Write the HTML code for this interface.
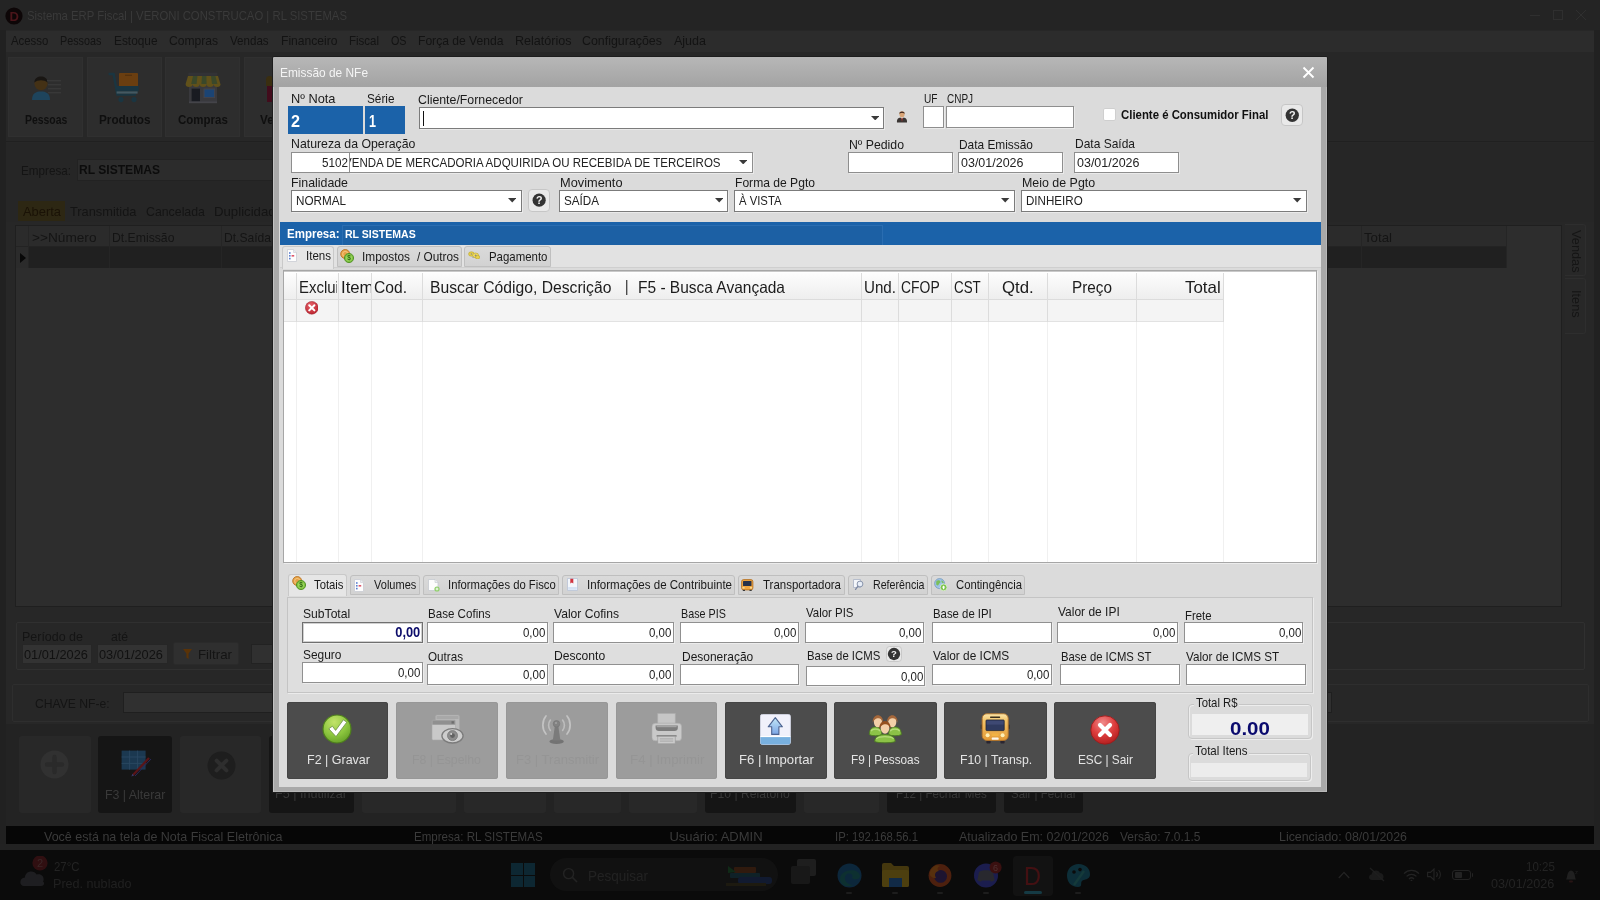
<!DOCTYPE html>
<html>
<head>
<meta charset="utf-8">
<title>Emissão de NFe</title>
<style>
*{box-sizing:border-box;margin:0;padding:0}
html,body{width:1600px;height:900px;overflow:hidden;background:#2b2b2b;font-family:"Liberation Sans",sans-serif;}
.a{position:absolute;white-space:nowrap;}
.t{position:absolute;white-space:nowrap;line-height:1;transform-origin:0 50%;}
/* ---------- dimmed background app ---------- */
#bg{will-change:transform;position:absolute;left:0;top:0;width:1600px;height:900px;background:#2b2b2b;overflow:hidden;}
#bg .t{color:#151515;font-size:13px;}
/* ---------- dialog ---------- */
#dlg{position:absolute;left:273px;top:57px;width:1054px;height:735px;background:#a9a9a9;border-radius:2px 2px 0 0;box-shadow:inset 1px 1px 0 #c2c2c2,inset -1px -1px 0 #b8b8b8,0 0 0 1px #1d1d1d;}
#dlgtitle{position:absolute;left:0;top:0;width:1054px;height:30px;background:linear-gradient(#b7b7b7,#a3a3a3);border-radius:2px 2px 0 0;}
#panel{position:absolute;left:279px;top:87px;width:1042px;height:700px;background:#dbdbdb;}
.lb{position:absolute;white-space:nowrap;line-height:1;font-size:13px;color:#111;transform-origin:0 50%;}
.in{position:absolute;background:#fff;border:1px solid #8a8a8a;font-size:13px;color:#111;line-height:1;overflow:hidden;white-space:nowrap;}
.num{position:absolute;background:#fff;border:1px solid #8a8a8a;border-top-color:#707070;font-size:13px;color:#111;text-align:right;padding:5px 3px 0 0;line-height:1;height:22px;width:121px;}
.arr{position:absolute;width:0;height:0;border-left:4px solid transparent;border-right:4px solid transparent;border-top:5px solid #333;}
</style>
</head>
<body>
<div id="bg">
<div class="a" style="left:0px;top:0px;width:1600px;height:30px;background:#242424;"></div>
<div class="a" style="left:0px;top:30px;width:1600px;height:820px;background:#272727;"></div>
<div class="a" style="left:0px;top:30px;width:6px;height:820px;background:#212121;"></div>
<div class="a" style="left:1594px;top:30px;width:6px;height:820px;background:#212121;"></div>
<svg class="a" style="left:5px;top:6.5px;" width="18" height="18" viewBox="0 0 18 18"><circle cx="9" cy="9" r="8.6" fill="#0d0607"/><text x="9.3" y="13.6" font-family="Liberation Sans" font-weight="bold" font-size="13" fill="#4a151a" text-anchor="middle">D</text></svg>
<span class="t" style="left:27.0px;top:8.8px;font-size:13.5px;color:#3a3a3a;transform:scaleX(0.839);">Sistema ERP Fiscal | VERONI CONSTRUCAO | RL SISTEMAS</span>
<div class="a" style="left:1530px;top:15px;width:10px;height:1px;background:#2f2f2f;"></div>
<div class="a" style="left:1553px;top:10px;width:10px;height:10px;border:1px solid #2f2f2f;"></div>
<svg class="a" style="left:1576px;top:10px;" width="10" height="10" viewBox="0 0 10 10"><path d="M0 0L10 10M10 0L0 10" stroke="#2f2f2f" stroke-width="1"/></svg>
<div class="a" style="left:6px;top:30.5px;width:1588px;height:21.5px;background:#2c2c2c;"></div>
<span class="t" style="left:10.7px;top:34.4px;font-size:13px;color:#131313;transform:scaleX(0.875);">Acesso</span>
<span class="t" style="left:60.4px;top:34.4px;font-size:13px;color:#131313;transform:scaleX(0.828);">Pessoas</span>
<span class="t" style="left:113.8px;top:34.4px;font-size:13px;color:#131313;transform:scaleX(0.912);">Estoque</span>
<span class="t" style="left:169.2px;top:34.4px;font-size:13px;color:#131313;transform:scaleX(0.931);">Compras</span>
<span class="t" style="left:230.2px;top:34.4px;font-size:13px;color:#131313;transform:scaleX(0.890);">Vendas</span>
<span class="t" style="left:281.0px;top:34.4px;font-size:13px;color:#131313;transform:scaleX(0.931);">Financeiro</span>
<span class="t" style="left:349.0px;top:34.4px;font-size:13px;color:#131313;transform:scaleX(0.884);">Fiscal</span>
<span class="t" style="left:391.0px;top:34.4px;font-size:13px;color:#131313;transform:scaleX(0.825);">OS</span>
<span class="t" style="left:418.0px;top:34.4px;font-size:13px;color:#131313;transform:scaleX(0.931);">Força de Venda</span>
<span class="t" style="left:515.0px;top:34.4px;font-size:13px;color:#131313;transform:scaleX(0.965);">Relatórios</span>
<span class="t" style="left:582.0px;top:34.4px;font-size:13px;color:#131313;transform:scaleX(0.954);">Configurações</span>
<span class="t" style="left:674.0px;top:34.4px;font-size:13px;color:#131313;transform:scaleX(0.962);">Ajuda</span>
<div class="a" style="left:6px;top:52px;width:1588px;height:89.5px;background:#272727;border-bottom:1px solid #202020;"></div>
<div class="a" style="left:8px;top:57px;width:75.2px;height:80px;background:#2d2d2d;border:1px solid #303030;"></div>
<div class="a" style="left:87.1px;top:57px;width:74.7px;height:80px;background:#2d2d2d;border:1px solid #303030;"></div>
<div class="a" style="left:165.3px;top:57px;width:74.7px;height:80px;background:#2d2d2d;border:1px solid #303030;"></div>
<div class="a" style="left:243.9px;top:57px;width:74.1px;height:80px;background:#2d2d2d;border:1px solid #303030;"></div>
<span class="t" style="left:25.4px;top:113.0px;font-size:13px;font-weight:bold;color:#0f0f0f;transform:scaleX(0.800);">Pessoas</span>
<span class="t" style="left:98.7px;top:113.0px;font-size:13px;font-weight:bold;color:#0f0f0f;transform:scaleX(0.903);">Produtos</span>
<span class="t" style="left:177.8px;top:113.0px;font-size:13px;font-weight:bold;color:#0f0f0f;transform:scaleX(0.884);">Compras</span>
<span class="t" style="left:259.5px;top:113.0px;font-size:13px;font-weight:bold;color:#0f0f0f;transform:scaleX(0.900);">Vendas</span>
<svg class="a" style="left:31px;top:74px;opacity:.8;" width="31" height="27" viewBox="0 0 31 27"><path d="M1 26C1 19 5 17.4 10 17.4C15 17.4 19 19 19 26Z" fill="#1b4a68"/><circle cx="10" cy="9.6" r="6.6" fill="#4a3210"/><path d="M3.4 8.4C3.4 0.6 16.6 0.6 16.6 8.4C13 5.6 7 5.6 3.4 8.4Z" fill="#15110d"/><rect x="16" y="6" width="14" height="1.4" fill="#3b3b3b"/><rect x="17" y="10" width="13" height="1.4" fill="#3b3b3b"/><rect x="17" y="14" width="13" height="1.4" fill="#3b3b3b"/><rect x="17" y="18" width="13" height="1.4" fill="#3b3b3b"/></svg>
<svg class="a" style="left:108px;top:71.5px;opacity:.8;" width="32" height="31" viewBox="0 0 32 31"><rect x="11" y="1" width="19" height="15" rx="1" fill="#7a430a"/><rect x="17" y="2.6" width="7" height="1.4" fill="#5e3306"/><path d="M0.6 2H5.6L9.4 22.6H28" fill="none" stroke="#163846" stroke-width="2.4"/><path d="M7.4 14H30.6V19.4H8.4Z" fill="#163846"/><rect x="8.6" y="19.4" width="21" height="2.2" fill="#4a6470"/><circle cx="13" cy="27.6" r="2.6" fill="#163846"/><circle cx="26" cy="27.6" r="2.6" fill="#163846"/></svg>
<svg class="a" style="left:184.5px;top:72px;opacity:.8;" width="36" height="32" viewBox="0 0 36 32"><rect x="4" y="10" width="28" height="21" fill="#3c3c42"/><rect x="3.4" y="0.6" width="29" height="3.2" fill="#343438"/><path d="M3 4H33L35.4 12H0.6Z" fill="#6e5a16"/><path d="M8 4H12.4L11.6 12H6.2ZM17 4H21.4L21.6 12H16.4ZM26 4H30.4L32.4 12H27Z" fill="#3e4f2a"/><path d="M0.6 12a3 2.6 0 0 0 7 0a3 2.6 0 0 0 7 0a3 2.6 0 0 0 7 0a3 2.6 0 0 0 7 0a3 2.6 0 0 0 7 0Z" fill="#6e5a16"/><rect x="6.6" y="16.6" width="8.4" height="13" fill="#15171f"/><rect x="19" y="17" width="10.6" height="8.6" fill="#174a86" stroke="#4a4a52" stroke-width="1"/><rect x="4" y="29.4" width="28" height="1.8" fill="#4a4a50"/></svg>
<div class="a" style="left:266px;top:76px;width:7px;height:10px;background:#3a2e10;border-radius:5px 5px 0 0;"></div>
<div class="a" style="left:266.5px;top:86px;width:6.5px;height:16px;background:#420c1c;"></div>
<div class="a" style="left:6px;top:142.5px;width:1588px;height:79.5px;background:#262626;"></div>
<span class="t" style="left:20.5px;top:164.0px;font-size:13px;color:#141414;transform:scaleX(0.899);">Empresa:</span>
<div class="a" style="left:76.5px;top:158.5px;width:623.5px;height:22px;background:#2c2c2c;border:1px solid #222;"></div>
<span class="t" style="left:78.5px;top:163.0px;font-size:13px;font-weight:bold;color:#0c0c0c;transform:scaleX(0.929);">RL SISTEMAS</span>
<div class="a" style="left:17.5px;top:201px;width:47px;height:20px;background:#2d2713;"></div>
<span class="t" style="left:22.5px;top:204.8px;font-size:13.5px;color:#1a1206;transform:scaleX(0.955);">Aberta</span>
<span class="t" style="left:70.0px;top:204.8px;font-size:13.5px;color:#141414;transform:scaleX(0.949);">Transmitida</span>
<span class="t" style="left:146.0px;top:204.8px;font-size:13.5px;color:#141414;transform:scaleX(0.913);">Cancelada</span>
<span class="t" style="left:213.5px;top:204.8px;font-size:13.5px;color:#141414;transform:scaleX(0.977);">Duplicidade</span>
<div class="a" style="left:15px;top:224.5px;width:1547px;height:382.5px;background:#2d2d2d;border:1px solid #1f1f1f;"></div>
<div class="a" style="left:16px;top:225.5px;width:1490.5px;height:21px;background:#2b2b2b;border-bottom:1px solid #232323;"></div>
<div class="a" style="left:16px;top:246.5px;width:1490.5px;height:21.2px;background:#202020;"></div>
<div class="a" style="left:16px;top:246.5px;width:11.5px;height:21.2px;background:#2b2b2b;"></div>
<div class="a" style="left:27.5px;top:225.5px;width:1px;height:42.2px;background:#252525;"></div>
<div class="a" style="left:108.5px;top:225.5px;width:1px;height:42.2px;background:#252525;"></div>
<div class="a" style="left:220.5px;top:225.5px;width:1px;height:42.2px;background:#252525;"></div>
<div class="a" style="left:1361.2px;top:225.5px;width:1px;height:42.2px;background:#252525;"></div>
<div class="a" style="left:1506.2px;top:225.5px;width:1px;height:42.2px;background:#252525;"></div>
<svg class="a" style="left:19.5px;top:253px;" width="6" height="10" viewBox="0 0 6 10"><path d="M0 0L6 5L0 10Z" fill="#080808"/></svg>
<span class="t" style="left:31.5px;top:230.8px;font-size:13.5px;color:#141414;transform:scaleX(1.011);">&gt;&gt;Número</span>
<span class="t" style="left:111.5px;top:230.8px;font-size:13.5px;color:#141414;transform:scaleX(0.905);">Dt.Emissão</span>
<span class="t" style="left:223.5px;top:230.8px;font-size:13.5px;color:#141414;transform:scaleX(0.894);">Dt.Saída</span>
<span class="t" style="left:1363.5px;top:230.8px;font-size:13.5px;color:#141414;transform:scaleX(0.981);">Total</span>
<div class="a" style="left:1564.5px;top:224px;width:21.5px;height:52px;background:#282828;border:1px solid #2e2e2e;border-left:none;border-radius:0 3px 3px 0;"></div>
<div class="a" style="left:1564.5px;top:278px;width:21.5px;height:56px;background:#282828;border:1px solid #2e2e2e;border-left:none;border-radius:0 3px 3px 0;"></div>
<span class="t" style="left:1575.5px;top:230px;font-size:13px;color:#151515;transform-origin:0 0;transform:rotate(90deg) translate(0,-50%) scaleX(0.98);">Vendas</span>
<span class="t" style="left:1575.5px;top:290px;font-size:13px;color:#151515;transform-origin:0 0;transform:rotate(90deg) translate(0,-50%) scaleX(0.98);">Itens</span>
<div class="a" style="left:16px;top:622px;width:1568.5px;height:48px;background:#272727;border:1px solid #303030;border-radius:2px;"></div>
<span class="t" style="left:22.0px;top:630.0px;font-size:13.5px;color:#141414;transform:scaleX(0.923);">Período de</span>
<span class="t" style="left:110.5px;top:630.0px;font-size:13.5px;color:#141414;transform:scaleX(0.905);">até</span>
<div class="a" style="left:21.9px;top:643.8px;width:70.6px;height:20.2px;background:#333;border:1px solid #262626;"></div>
<div class="a" style="left:96.7px;top:643.8px;width:71.5px;height:20.2px;background:#333;border:1px solid #262626;"></div>
<span class="t" style="left:24.0px;top:647.5px;font-size:13.5px;color:#111;transform:scaleX(0.946);">01/01/2026</span>
<span class="t" style="left:99.0px;top:647.5px;font-size:13.5px;color:#111;transform:scaleX(0.946);">03/01/2026</span>
<div class="a" style="left:173.3px;top:642.2px;width:65.7px;height:23.2px;background:#2f2f2f;border:1px solid #2a2a2a;border-radius:2px;"></div>
<svg class="a" style="left:183px;top:649px;" width="9" height="10" viewBox="0 0 9 10"><path d="M0 0H9L5.6 4.4V10L3.4 8.4V4.4Z" fill="#5a3308"/></svg>
<span class="t" style="left:197.5px;top:647.5px;font-size:13.5px;color:#141414;transform:scaleX(0.985);">Filtrar</span>
<div class="a" style="left:251.3px;top:644.4px;width:448.7px;height:19.6px;background:#303030;border:1px solid #222;"></div>
<div class="a" style="left:12px;top:683.5px;width:1577px;height:38.5px;background:#272727;border:1px solid #2e2e2e;border-radius:2px;"></div>
<span class="t" style="left:34.8px;top:697.2px;font-size:13.5px;color:#141414;transform:scaleX(0.900);">CHAVE NF-e:</span>
<div class="a" style="left:123.4px;top:692.1px;width:1208.6px;height:21.3px;background:#303030;border:1px solid #1f1f1f;"></div>
<div class="a" style="left:6px;top:724px;width:1588px;height:101.8px;background:#232323;"></div>
<div class="a" style="left:18.7px;top:735.6px;width:72.2px;height:77px;background:#282828;border-radius:3px;"></div>
<div class="a" style="left:98.3px;top:735.6px;width:74.1px;height:77px;background:#151515;border-radius:3px;"></div>
<div class="a" style="left:180.4px;top:735.6px;width:80.6px;height:77px;background:#282828;border-radius:3px;"></div>
<div class="a" style="left:269.4px;top:735.6px;width:85.1px;height:77px;background:#151515;border-radius:3px;"></div>
<div class="a" style="left:362.4px;top:735.6px;width:93.4px;height:77px;background:#282828;border-radius:3px;"></div>
<div class="a" style="left:463.7px;top:735.6px;width:82.4px;height:77px;background:#282828;border-radius:3px;"></div>
<div class="a" style="left:554px;top:735.6px;width:67.2px;height:77px;background:#282828;border-radius:3px;"></div>
<div class="a" style="left:629px;top:735.6px;width:67.7px;height:77px;background:#282828;border-radius:3px;"></div>
<div class="a" style="left:704.6px;top:735.6px;width:91.9px;height:77px;background:#151515;border-radius:3px;"></div>
<div class="a" style="left:804.4px;top:735.6px;width:75px;height:77px;background:#282828;border-radius:3px;"></div>
<div class="a" style="left:887.3px;top:735.6px;width:108.7px;height:77px;background:#151515;border-radius:3px;"></div>
<div class="a" style="left:1004.4px;top:735.6px;width:78.2px;height:77px;background:#151515;border-radius:3px;"></div>
<svg class="a" style="left:40px;top:749.5px;" width="29" height="29" viewBox="0 0 29 29"><circle cx="14.5" cy="14.5" r="14" fill="#313131"/><path d="M14.5 7V22M7 14.5H22" stroke="#2a2a2a" stroke-width="4.4" stroke-linecap="round"/></svg>
<svg class="a" style="left:206.5px;top:750.5px;" width="29" height="29" viewBox="0 0 29 29"><circle cx="14.5" cy="14.5" r="14" fill="#1e1e1e"/><path d="M9.6 9.6L19.4 19.4M19.4 9.6L9.6 19.4" stroke="#2e2e2e" stroke-width="4" stroke-linecap="round"/></svg>
<svg class="a" style="left:120.5px;top:750px;" width="31" height="27" viewBox="0 0 31 27"><rect x="0.6" y="0.6" width="24" height="19" fill="#1b3850"/><path d="M0.6 7H24.6M0.6 13.4H24.6M8.6 0.6V19.6M16.6 0.6V19.6" stroke="#2a4862" stroke-width="0.9"/><path d="M12 25L28 8" stroke="#5a1418" stroke-width="2.2"/><path d="M10.4 26.4L13 25.6L11.4 23.8Z" fill="#3a3a6a"/><path d="M14 26L30 9" stroke="#2a2a5a" stroke-width="1"/></svg>
<span class="t" style="left:104.7px;top:787.5px;font-size:13.5px;color:#3a3a3a;transform:scaleX(0.916);">F3 | Alterar</span>
<span class="t" style="left:274.7px;top:786.8px;font-size:13.5px;color:#383838;transform:scaleX(0.934);">F5 | Inutilizar</span>
<span class="t" style="left:710.4px;top:786.8px;font-size:13.5px;color:#383838;transform:scaleX(0.903);">F10 | Relatório</span>
<span class="t" style="left:896.2px;top:786.8px;font-size:13.5px;color:#383838;transform:scaleX(0.860);">F12 | Fechar Mês</span>
<span class="t" style="left:1010.7px;top:786.8px;font-size:13.5px;color:#383838;transform:scaleX(0.851);">Sair | Fechar</span>
<div class="a" style="left:5.8px;top:825.8px;width:1588.2px;height:18.6px;background:#060606;"></div>
<span class="t" style="left:43.5px;top:830.0px;font-size:13px;color:#3b3b3b;transform:scaleX(0.962);">Você está na tela de Nota Fiscal Eletrônica</span>
<span class="t" style="left:413.8px;top:830.0px;font-size:13px;color:#3b3b3b;transform:scaleX(0.889);">Empresa: RL SISTEMAS</span>
<span class="t" style="left:669.4px;top:830.0px;font-size:13px;color:#3b3b3b;">Usuário: ADMIN</span>
<span class="t" style="left:834.8px;top:830.0px;font-size:13px;color:#3b3b3b;transform:scaleX(0.869);">IP: 192.168.56.1</span>
<span class="t" style="left:959.2px;top:830.0px;font-size:13px;color:#3b3b3b;transform:scaleX(0.961);">Atualizado Em: 02/01/2026</span>
<span class="t" style="left:1119.5px;top:830.0px;font-size:13px;color:#3b3b3b;transform:scaleX(0.920);">Versão: 7.0.1.5</span>
<span class="t" style="left:1279.0px;top:830.0px;font-size:13px;color:#3b3b3b;transform:scaleX(0.952);">Licenciado: 08/01/2026</span>
<div class="a" style="left:0px;top:844.4px;width:1600px;height:5.6px;background:#222;"></div>
<div class="a" style="left:0px;top:850px;width:1600px;height:50px;background:#0b0b0b;"></div>
<div class="a" style="left:0;top:0;width:1600px;height:900px;opacity:0.6">
<svg class="a" style="left:20px;top:856px;" width="60" height="34" viewBox="0 0 60 34"><path d="M4 30C-1 30 -1 22 5 21.6C5 15 14 13.6 16.6 18.6C22 17 25 22 23 25.6C25 27 24 30 21 30Z" fill="#2c2c30"/><circle cx="20" cy="7" r="7.6" fill="#4a1216"/><text x="20" y="11" font-family="Liberation Sans" font-size="11" fill="#5a3a3a" text-anchor="middle">2</text></svg>
<span class="t" style="left:54.0px;top:860.0px;font-size:13px;color:#343434;transform:scaleX(0.877);">27°C</span>
<span class="t" style="left:53.0px;top:876.8px;font-size:13px;color:#2e2e2e;transform:scaleX(0.969);">Pred. nublado</span>
<div class="a" style="left:511.2px;top:863.2px;width:11.5px;height:11.5px;background:#0f3a4c;"></div>
<div class="a" style="left:523.7px;top:863.2px;width:11.5px;height:11.5px;background:#0f3a4c;"></div>
<div class="a" style="left:511.2px;top:875.7px;width:11.5px;height:11.5px;background:#0f3a4c;"></div>
<div class="a" style="left:523.7px;top:875.7px;width:11.5px;height:11.5px;background:#0f3a4c;"></div>
<div class="a" style="left:550px;top:858px;width:228px;height:33.2px;background:#161616;border-radius:17px;"></div>
<svg class="a" style="left:562px;top:867px;" width="16" height="16" viewBox="0 0 16 16"><circle cx="6.6" cy="6.6" r="5" fill="none" stroke="#343434" stroke-width="1.4"/><path d="M10.4 10.4L15 15" stroke="#343434" stroke-width="1.5"/></svg>
<span class="t" style="left:588.0px;top:869.0px;font-size:14px;color:#323232;transform:scaleX(0.964);">Pesquisar</span>
<svg class="a" style="left:724px;top:864px;" width="50" height="24" viewBox="0 0 50 24"><rect x="10" y="3" width="22" height="6" rx="1" fill="#4a2410"/><rect x="6" y="9" width="30" height="5" rx="1" fill="#12303a"/><rect x="14" y="13" width="34" height="7" rx="3" fill="#15254a"/><path d="M4 2L12 8L4 9Z" fill="#14401f"/><rect x="2" y="19" width="40" height="3" fill="#2a2414"/></svg>
<div class="a" style="left:797px;top:858.5px;width:19px;height:17.5px;background:#2c2c2c;border-radius:2px;"></div>
<div class="a" style="left:791px;top:866px;width:19px;height:18px;background:#222;border-radius:2px;"></div>
<svg class="a" style="left:836.5px;top:863px;" width="25" height="25" viewBox="0 0 25 25"><circle cx="12.5" cy="12.5" r="12" fill="#0e3a5c"/><path d="M3 16C3 6 22 4 23 13C23 17 17 17 15 15C17 11 12 9 9 12C6 15 9 22 16 22C10 25 3 22 3 16Z" fill="#0f4a4a"/></svg>
<svg class="a" style="left:882px;top:863px;" width="27" height="24" viewBox="0 0 27 24"><path d="M0 2a2 2 0 0 1 2-2H9L12 3H25a2 2 0 0 1 2 2V22a2 2 0 0 1 -2 2H2a2 2 0 0 1 -2-2Z" fill="#6b5510"/><rect x="0" y="7" width="27" height="17" rx="2" fill="#7a6212"/><rect x="7" y="15" width="13" height="9" fill="#163f6e"/></svg>
<svg class="a" style="left:928px;top:863px;" width="24" height="24" viewBox="0 0 24 24"><circle cx="12" cy="12.5" r="11.4" fill="#7a2f10"/><circle cx="12.6" cy="13.4" r="6.4" fill="#2a1a4a"/><path d="M2 9C4 3 9 1 12 3C9 4 9 7 11 8C7 8 6 12 8 15C4 15 1 13 2 9Z" fill="#8a4a10"/></svg>
<svg class="a" style="left:973px;top:861px;" width="30" height="27" viewBox="0 0 30 27"><circle cx="13" cy="14.6" r="12" fill="#262a7c"/><path d="M6 11C9 8.6 17 8.6 20 11L21.6 19C19 21 17.6 21 17 19.6H9C8.4 21 7 21 4.4 19Z" fill="#3c3c46"/><circle cx="22.6" cy="6.4" r="6" fill="#5a1414"/><text x="22.6" y="10" font-family="Liberation Sans" font-size="9" fill="#7a4a4a" text-anchor="middle">6</text></svg>
<div class="a" style="left:1013px;top:855.5px;width:40px;height:40px;background:#181818;border-radius:4px;"></div>
<span class="t" style="left:1023.5px;top:863.5px;font-size:25px;color:#6a1418;transform:scaleX(0.942);">D</span>
<div class="a" style="left:1024px;top:891px;width:18px;height:2.6px;background:#1c5a6a;border-radius:2px;"></div>
<svg class="a" style="left:1066px;top:863px;" width="25" height="25" viewBox="0 0 25 25"><path d="M12.5 1C20 1 24.4 6 24 12C23.6 17 18 16 16 18C14 20 17 24 12 24C5 24 1 19 1 12.5C1 6 6 1 12.5 1Z" fill="#0f4656"/><circle cx="8" cy="9" r="1.8" fill="#0b0b0b"/><circle cx="14" cy="6.6" r="1.8" fill="#0b0b0b"/><path d="M8 22L18 8" stroke="#1c5a5a" stroke-width="2.4"/></svg>
<div class="a" style="left:845.8px;top:892px;width:6px;height:2px;background:#2a2a2a;border-radius:1px;"></div>
<div class="a" style="left:892px;top:892px;width:6px;height:2px;background:#2a2a2a;border-radius:1px;"></div>
<div class="a" style="left:937px;top:892px;width:6px;height:2px;background:#2a2a2a;border-radius:1px;"></div>
<div class="a" style="left:983px;top:892px;width:6px;height:2px;background:#2a2a2a;border-radius:1px;"></div>
<div class="a" style="left:1075px;top:892px;width:6px;height:2px;background:#2a2a2a;border-radius:1px;"></div>
<svg class="a" style="left:1338px;top:871px;" width="12" height="8" viewBox="0 0 12 8"><path d="M0.8 7L6 1.4L11.2 7" fill="none" stroke="#343434" stroke-width="1.3"/></svg>
<svg class="a" style="left:1368px;top:867px;" width="18" height="15" viewBox="0 0 18 15"><path d="M4 13C0 13 0 8 3.6 7.6C4 3 10 2 12 6C16 6 17 12.6 13 13Z" fill="#262626"/><path d="M2 1L16 14" stroke="#2c2c2c" stroke-width="1.3"/></svg>
<svg class="a" style="left:1402.5px;top:868.5px;" width="17" height="12.5" viewBox="0 0 17 12.5"><path d="M1 4.6C5 0.4 12 0.4 16 4.6" fill="none" stroke="#343434" stroke-width="1.3"/><path d="M3.6 7.4C6.4 4.6 10.6 4.6 13.4 7.4" fill="none" stroke="#343434" stroke-width="1.3"/><path d="M6 10C7.4 8.6 9.6 8.6 11 10" fill="none" stroke="#343434" stroke-width="1.3"/><circle cx="8.5" cy="11.6" r="0.9" fill="#343434"/></svg>
<svg class="a" style="left:1427px;top:868px;" width="15" height="13" viewBox="0 0 15 13"><path d="M0.6 4.4H3.4L7 1V12L3.4 8.6H0.6Z" fill="none" stroke="#343434" stroke-width="1.1"/><path d="M9.4 4C10.6 5.4 10.6 7.6 9.4 9M11.6 2C14 4.6 14 8.4 11.6 11" fill="none" stroke="#343434" stroke-width="1.1"/></svg>
<div class="a" style="left:1452.4px;top:870px;width:19.1px;height:10px;border:1.3px solid #343434;border-radius:3px;"></div>
<div class="a" style="left:1454.6px;top:872.2px;width:7.9px;height:5.6px;background:#343434;border-radius:1px;"></div>
<div class="a" style="left:1471.5px;top:873.2px;width:1.7px;height:3.6px;background:#343434;border-radius:0 1px 1px 0;"></div>
<span class="t" style="left:1525.6px;top:859.9px;font-size:13px;color:#343434;transform:scaleX(0.885);">10:25</span>
<span class="t" style="left:1491.0px;top:876.5px;font-size:13px;color:#343434;transform:scaleX(0.974);">03/01/2026</span>
<svg class="a" style="left:1564px;top:867.5px;" width="15" height="16" viewBox="0 0 15 16"><path d="M2 11.6C3.6 10 2.6 3 7 2.4C11.6 3 10.6 10 12 11.6Z" fill="#2e2e2e"/><rect x="5" y="12.6" width="4" height="2" rx="1" fill="#3a1a1a"/><text x="11" y="6" font-family="Liberation Sans" font-size="6" fill="#2e2e2e">z</text></svg>
</div>

</div>
<div id="dlg"><div id="dlgtitle"></div></div>
<div id="panel"></div>
<div id="fg" style="position:absolute;left:0;top:0;width:1600px;height:900px;will-change:transform;">
<span class="t" style="left:279.5px;top:65.5px;font-size:13.5px;color:#f4f4f4;transform:scaleX(0.882);">Emissão de NFe</span>
<svg class="a" style="left:1302px;top:66px" width="13" height="13" viewBox="0 0 13 13"><path d="M1.5 1.5 L11.5 11.5 M11.5 1.5 L1.5 11.5" stroke="#fff" stroke-width="1.9" fill="none"/></svg>
<span class="t" style="left:291.0px;top:92.3px;font-size:13px;color:#1a1a1a;transform:scaleX(0.984);">Nº Nota</span>
<span class="t" style="left:367.0px;top:92.3px;font-size:13px;color:#1a1a1a;transform:scaleX(0.906);">Série</span>
<span class="t" style="left:418.0px;top:93.0px;font-size:13px;color:#1a1a1a;transform:scaleX(0.949);">Cliente/Fornecedor</span>
<span class="t" style="left:923.5px;top:91.8px;font-size:13px;color:#1a1a1a;transform:scaleX(0.779);">UF</span>
<span class="t" style="left:946.5px;top:91.8px;font-size:13px;color:#1a1a1a;transform:scaleX(0.766);">CNPJ</span>
<div class="a" style="left:288px;top:106px;width:75px;height:28px;background:#1b62a9;"></div>
<div class="a" style="left:365px;top:106px;width:40px;height:28px;background:#1b62a9;"></div>
<span class="t" style="left:290.5px;top:113.8px;font-size:16px;font-weight:bold;color:#fff;transform:scaleX(1.011);">2</span>
<span class="t" style="left:368.5px;top:113.8px;font-size:16px;font-weight:bold;color:#fff;transform:scaleX(0.786);">1</span>
<div class="a" style="left:419px;top:107px;width:465px;height:22px;background:#fff;border:1px solid #7b7b7b;box-shadow:1px 1px 0 #eaeaea;"></div>
<div class="a" style="left:423px;top:110.5px;width:1px;height:15px;background:#111;"></div>
<svg class="a" style="left:870.5px;top:116px" width="8.4" height="4.4" viewBox="0 0 8.4 4.4"><path d="M0 0H8.4L4.2 4.4Z" fill="#3a3a3a"/></svg>
<svg class="a" style="left:896px;top:109.5px" width="12" height="13" viewBox="0 0 12 13"><path d="M1 12.5 C0.6 9 2.5 7.6 4.3 7.4 L6 9 L7.7 7.4 C9.5 7.6 11.4 9 11 12.5 Z" fill="#3a3533"/><path d="M5.2 8.2 L6 12 L6.8 8.2 Z" fill="#a33"/><ellipse cx="6" cy="4.3" rx="2.6" ry="3.1" fill="#d9a577"/><path d="M3.2 3.8 C3.2 0.8 8.8 0.8 8.8 3.8 C8 2.6 4 2.6 3.2 3.8Z" fill="#4a2e22"/></svg>
<div class="a" style="left:923px;top:106px;width:21px;height:22px;background:#fff;border:1px solid #8e8e8e;box-shadow:1px 1px 0 #eaeaea;"></div>
<div class="a" style="left:946px;top:106px;width:127.5px;height:22px;background:#fff;border:1px solid #8e8e8e;box-shadow:1px 1px 0 #eaeaea;"></div>
<div class="a" style="left:1103px;top:108px;width:13px;height:13px;background:#fff;border:1px solid #cfcfcf;border-radius:2px;"></div>
<span class="t" style="left:1120.5px;top:109.0px;font-size:12.5px;font-weight:bold;color:#111;transform:scaleX(0.911);">Cliente é Consumidor Final</span>
<div class="a" style="left:1280.5px;top:103.5px;width:22.5px;height:22.5px;background:#e9e9e9;border:1px solid #c6c6c6;border-radius:4px;"></div><svg class="a" style="left:1280.5px;top:103.5px" width="22.5" height="22.5" viewBox="0 0 20 20"><circle cx="10" cy="10" r="5.9" fill="#333"/><text x="10" y="13.5" font-family="Liberation Sans" font-weight="bold" font-size="9.6" fill="#f2f2f2" text-anchor="middle">?</text></svg>
<span class="t" style="left:291.0px;top:136.8px;font-size:13px;color:#1a1a1a;transform:scaleX(0.946);">Natureza da Operação</span>
<div class="a" style="left:291px;top:152px;width:58.5px;height:21px;background:#fff;border:1px solid #8e8e8e;"></div>
<span class="t" style="left:321.5px;top:155.9px;font-size:13px;color:#222;transform:scaleX(0.898);">5102</span>
<div class="a" style="left:349px;top:152px;width:403.5px;height:21px;background:#fff;border:1px solid #8e8e8e;box-shadow:1px 1px 0 #eaeaea;overflow:hidden;"><span class="t" style="left:-6.5px;top:2.9px;font-size:13px;color:#222;transform:scaleX(0.887);">VENDA DE MERCADORIA ADQUIRIDA OU RECEBIDA DE TERCEIROS</span>
</div>
<svg class="a" style="left:739px;top:160px" width="8.4" height="4.4" viewBox="0 0 8.4 4.4"><path d="M0 0H8.4L4.2 4.4Z" fill="#3a3a3a"/></svg>
<span class="t" style="left:848.5px;top:138.0px;font-size:13px;color:#1a1a1a;transform:scaleX(0.944);">Nº Pedido</span>
<div class="a" style="left:848px;top:152px;width:104.5px;height:21px;background:#fff;border:1px solid #8e8e8e;box-shadow:1px 1px 0 #eaeaea;"></div>
<span class="t" style="left:959.0px;top:138.0px;font-size:13px;color:#1a1a1a;transform:scaleX(0.914);">Data Emissão</span>
<div class="a" style="left:958px;top:152px;width:104.5px;height:21px;background:#fff;border:1px solid #8e8e8e;box-shadow:1px 1px 0 #eaeaea;"></div>
<span class="t" style="left:960.5px;top:155.9px;font-size:13px;color:#222;transform:scaleX(0.960);">03/01/2026</span>
<span class="t" style="left:1074.5px;top:137.0px;font-size:13px;color:#1a1a1a;transform:scaleX(0.922);">Data Saída</span>
<div class="a" style="left:1074px;top:152px;width:104.5px;height:21px;background:#fff;border:1px solid #8e8e8e;box-shadow:1px 1px 0 #eaeaea;"></div>
<span class="t" style="left:1076.5px;top:155.9px;font-size:13px;color:#222;transform:scaleX(0.960);">03/01/2026</span>
<span class="t" style="left:291.0px;top:176.0px;font-size:13px;color:#1a1a1a;transform:scaleX(0.950);">Finalidade</span>
<div class="a" style="left:291px;top:190px;width:231px;height:21.5px;background:#fff;border:1px solid #7b7b7b;box-shadow:1px 1px 0 #eaeaea;"></div>
<span class="t" style="left:295.5px;top:194.3px;font-size:13px;color:#222;transform:scaleX(0.899);">NORMAL</span>
<svg class="a" style="left:508px;top:198.3px" width="8.4" height="4.4" viewBox="0 0 8.4 4.4"><path d="M0 0H8.4L4.2 4.4Z" fill="#3a3a3a"/></svg>
<div class="a" style="left:527.5px;top:189.3px;width:22.3px;height:22.3px;background:#e9e9e9;border:1px solid #c6c6c6;border-radius:4px;"></div><svg class="a" style="left:527.5px;top:189.3px" width="22.3" height="22.3" viewBox="0 0 20 20"><circle cx="10" cy="10" r="5.9" fill="#333"/><text x="10" y="13.5" font-family="Liberation Sans" font-weight="bold" font-size="9.6" fill="#f2f2f2" text-anchor="middle">?</text></svg>
<span class="t" style="left:559.5px;top:175.5px;font-size:13px;color:#1a1a1a;transform:scaleX(0.983);">Movimento</span>
<div class="a" style="left:559px;top:190px;width:169px;height:21.5px;background:#fff;border:1px solid #7b7b7b;box-shadow:1px 1px 0 #eaeaea;"></div>
<span class="t" style="left:563.7px;top:194.3px;font-size:13px;color:#222;transform:scaleX(0.897);">SAÍDA</span>
<svg class="a" style="left:714.5px;top:198.3px" width="8.4" height="4.4" viewBox="0 0 8.4 4.4"><path d="M0 0H8.4L4.2 4.4Z" fill="#3a3a3a"/></svg>
<span class="t" style="left:735.0px;top:176.0px;font-size:13px;color:#1a1a1a;transform:scaleX(0.930);">Forma de Pgto</span>
<div class="a" style="left:734px;top:190px;width:280.5px;height:21.5px;background:#fff;border:1px solid #7b7b7b;box-shadow:1px 1px 0 #eaeaea;"></div>
<span class="t" style="left:738.7px;top:194.3px;font-size:13px;color:#222;transform:scaleX(0.870);">À VISTA</span>
<svg class="a" style="left:1001.2px;top:198.3px" width="8.4" height="4.4" viewBox="0 0 8.4 4.4"><path d="M0 0H8.4L4.2 4.4Z" fill="#3a3a3a"/></svg>
<span class="t" style="left:1021.7px;top:176.2px;font-size:13px;color:#1a1a1a;transform:scaleX(0.955);">Meio de Pgto</span>
<div class="a" style="left:1021px;top:190px;width:285.7px;height:21.5px;background:#fff;border:1px solid #7b7b7b;box-shadow:1px 1px 0 #eaeaea;"></div>
<span class="t" style="left:1025.8px;top:194.3px;font-size:13px;color:#222;transform:scaleX(0.892);">DINHEIRO</span>
<svg class="a" style="left:1293.3px;top:198.3px" width="8.4" height="4.4" viewBox="0 0 8.4 4.4"><path d="M0 0H8.4L4.2 4.4Z" fill="#3a3a3a"/></svg>
<div class="a" style="left:279.5px;top:222px;width:1041px;height:22.5px;background:#1b62a9;"></div>
<div class="a" style="left:342px;top:224.5px;width:541px;height:20px;background:#1c60a4;border:1px solid #2a6db1;border-bottom:none;"></div>
<span class="t" style="left:287.2px;top:226.9px;font-size:13px;font-weight:bold;color:#fff;transform:scaleX(0.886);">Empresa:</span>
<span class="t" style="left:344.7px;top:229.3px;font-size:11.5px;font-weight:bold;color:#fff;transform:scaleX(0.917);">RL SISTEMAS</span>
<div class="a" style="left:279.5px;top:244.5px;width:1041px;height:23.5px;background:#e2e2e2;"></div>
<div class="a" style="left:279.5px;top:267px;width:1041px;height:1px;background:#cfcfcf;"></div>
<div class="a" style="left:282px;top:245.5px;width:52px;height:23px;background:#e6e6e6;border:1px solid #c9c9c9;border-bottom:none;border-radius:3px 3px 0 0;"></div>
<div class="a" style="left:337px;top:246px;width:124.5px;height:20.5px;background:linear-gradient(#dadada,#d2d2d2);border:1px solid #bfbfbf;border-radius:3px 3px 0 0;"></div>
<div class="a" style="left:464px;top:246px;width:86.5px;height:20.5px;background:linear-gradient(#dadada,#d2d2d2);border:1px solid #bfbfbf;border-radius:3px 3px 0 0;"></div>
<svg class="a" style="left:286.5px;top:249px;" width="10" height="13" viewBox="0 0 10 13"><path d="M0.5 0.5H6.5L9.5 3.5V12.5H0.5Z" fill="#fdfdfd" stroke="#c9ccd3" stroke-width="0.8"/><path d="M6.5 0.5V3.5H9.5" fill="#e9ebf0" stroke="#c9ccd3" stroke-width="0.6"/><rect x="2" y="3.2" width="1.6" height="1.6" fill="#5b7fd0"/><rect x="2" y="6" width="1.6" height="1.6" fill="#5b7fd0"/><rect x="2" y="8.8" width="1.6" height="1.6" fill="#5b7fd0"/><rect x="4.6" y="6" width="2.6" height="1.6" fill="#e0566a"/></svg>
<span class="t" style="left:306.0px;top:248.9px;font-size:13px;color:#1a1a1a;transform:scaleX(0.887);">Itens</span>
<svg class="a" style="left:339.5px;top:248.5px;" width="14" height="14" viewBox="0 0 14 14"><circle cx="5.2" cy="5" r="4.5" fill="#e7a248" stroke="#b9772a" stroke-width="0.9"/><circle cx="5.2" cy="5" r="2.6" fill="none" stroke="#f6cf8b" stroke-width="0.8"/><circle cx="9" cy="9" r="4.6" fill="#7fc242" stroke="#4d8f22" stroke-width="0.9"/><circle cx="9" cy="9" r="3" fill="#9bd65c"/><text x="9" y="11.4" font-family="Liberation Sans" font-weight="bold" font-size="6.5" fill="#2e6a12" text-anchor="middle">$</text></svg>
<span class="t" style="left:361.7px;top:249.5px;font-size:13px;color:#1a1a1a;transform:scaleX(0.910);">Impostos</span>
<span class="t" style="left:416.5px;top:249.5px;font-size:13px;color:#1a1a1a;transform:scaleX(0.908);">/ Outros</span>
<svg class="a" style="left:468px;top:250.5px;" width="12" height="8.5" viewBox="0 0 12 8.5"><ellipse cx="3.4" cy="3" rx="2.8" ry="2.2" fill="#e8d24a" stroke="#b8a22c" stroke-width="0.6"/><ellipse cx="7.6" cy="4.4" rx="3" ry="2.4" fill="#f1dd62" stroke="#b8a22c" stroke-width="0.6"/><ellipse cx="9.6" cy="6.2" rx="2.2" ry="1.8" fill="#e8d24a" stroke="#b8a22c" stroke-width="0.6"/><circle cx="3.4" cy="3" r="0.8" fill="#8a8a8a"/><circle cx="7.6" cy="4.4" r="0.9" fill="#8a8a8a"/><circle cx="5" cy="6.3" r="0.7" fill="#9a9a9a"/></svg>
<span class="t" style="left:489.2px;top:249.5px;font-size:13px;color:#1a1a1a;transform:scaleX(0.879);">Pagamento</span>
<div class="a" style="left:282.5px;top:270px;width:1034.5px;height:292.8px;background:#fff;border:1px solid #a6a6a6;box-shadow:inset 0 1px 0 #c9c9c9,1px 1px 0 #ececec;"></div>
<div class="a" style="left:283.5px;top:272.5px;width:940.3px;height:27.5px;background:linear-gradient(#fdfdfd,#eeeeee);border-bottom:1px solid #dcdcdc;"></div>
<div class="a" style="left:283.5px;top:300px;width:940.3px;height:22px;background:#f4f4f4;border-bottom:1px solid #e2e2e2;"></div>
<div class="a" style="left:296px;top:272.5px;width:1px;height:49.5px;background:#dcdcdc;"></div>
<div class="a" style="left:296px;top:322px;width:1px;height:239.5px;background:#f0f0f0;"></div>
<div class="a" style="left:337.5px;top:272.5px;width:1px;height:49.5px;background:#dcdcdc;"></div>
<div class="a" style="left:337.5px;top:322px;width:1px;height:239.5px;background:#f0f0f0;"></div>
<div class="a" style="left:371.3px;top:272.5px;width:1px;height:49.5px;background:#dcdcdc;"></div>
<div class="a" style="left:371.3px;top:322px;width:1px;height:239.5px;background:#f0f0f0;"></div>
<div class="a" style="left:422.3px;top:272.5px;width:1px;height:49.5px;background:#dcdcdc;"></div>
<div class="a" style="left:422.3px;top:322px;width:1px;height:239.5px;background:#f0f0f0;"></div>
<div class="a" style="left:861.3px;top:272.5px;width:1px;height:49.5px;background:#dcdcdc;"></div>
<div class="a" style="left:861.3px;top:322px;width:1px;height:239.5px;background:#f0f0f0;"></div>
<div class="a" style="left:898.3px;top:272.5px;width:1px;height:49.5px;background:#dcdcdc;"></div>
<div class="a" style="left:898.3px;top:322px;width:1px;height:239.5px;background:#f0f0f0;"></div>
<div class="a" style="left:950.8px;top:272.5px;width:1px;height:49.5px;background:#dcdcdc;"></div>
<div class="a" style="left:950.8px;top:322px;width:1px;height:239.5px;background:#f0f0f0;"></div>
<div class="a" style="left:987.8px;top:272.5px;width:1px;height:49.5px;background:#dcdcdc;"></div>
<div class="a" style="left:987.8px;top:322px;width:1px;height:239.5px;background:#f0f0f0;"></div>
<div class="a" style="left:1047px;top:272.5px;width:1px;height:49.5px;background:#dcdcdc;"></div>
<div class="a" style="left:1047px;top:322px;width:1px;height:239.5px;background:#f0f0f0;"></div>
<div class="a" style="left:1136.3px;top:272.5px;width:1px;height:49.5px;background:#dcdcdc;"></div>
<div class="a" style="left:1136.3px;top:322px;width:1px;height:239.5px;background:#f0f0f0;"></div>
<div class="a" style="left:1223.3px;top:272.5px;width:1px;height:49.5px;background:#dcdcdc;"></div>
<div class="a" style="left:1223.3px;top:322px;width:1px;height:239.5px;background:#f0f0f0;"></div>
<div class="a" style="left:296.5px;top:273px;width:40.8px;height:26px;overflow:hidden;"><span class="t" style="left:2.5px;top:5.6px;font-size:16.5px;color:#1c1c1c;transform:scaleX(0.907);">Excluir</span>
</div>
<div class="a" style="left:338px;top:273px;width:33.2px;height:26px;overflow:hidden;"><span class="t" style="left:3.0px;top:5.6px;font-size:16.5px;color:#1c1c1c;transform:scaleX(1.013);">Item</span>
</div>
<span class="t" style="left:374.3px;top:278.6px;font-size:16.5px;color:#1c1c1c;transform:scaleX(0.947);">Cod.</span>
<span class="t" style="left:429.7px;top:278.6px;font-size:16.5px;color:#1c1c1c;transform:scaleX(0.951);">Buscar Código, Descrição</span>
<span class="t" style="left:625.3px;top:278.1px;font-size:16.5px;color:#1c1c1c;transform:scaleX(0.818);">|</span>
<span class="t" style="left:637.5px;top:278.6px;font-size:16.5px;color:#1c1c1c;transform:scaleX(0.939);">F5 - Busca Avançada</span>
<span class="t" style="left:864.3px;top:278.6px;font-size:16.5px;color:#1c1c1c;transform:scaleX(0.918);">Und.</span>
<span class="t" style="left:901.3px;top:278.6px;font-size:16.5px;color:#1c1c1c;transform:scaleX(0.844);">CFOP</span>
<span class="t" style="left:953.8px;top:278.6px;font-size:16.5px;color:#1c1c1c;transform:scaleX(0.809);">CST</span>
<span class="t" style="left:1002.0px;top:278.6px;font-size:16.5px;color:#1c1c1c;transform:scaleX(1.017);">Qtd.</span>
<span class="t" style="left:1072.0px;top:278.6px;font-size:16.5px;color:#1c1c1c;transform:scaleX(0.928);">Preço</span>
<span class="t" style="left:1185.0px;top:278.6px;font-size:16.5px;color:#1c1c1c;transform:scaleX(1.025);">Total</span>
<svg class="a" style="left:304.7px;top:301px;" width="13.6" height="13.6" viewBox="0 0 20 20"><defs><radialGradient id="dg304" cx="0.4" cy="0.3" r="0.8"><stop offset="0" stop-color="#e6616a"/><stop offset="1" stop-color="#b81f2a"/></radialGradient></defs><circle cx="10" cy="10" r="9.4" fill="url(#dg304)" stroke="#a0202a" stroke-width="0.8"/><path d="M6.2 6.2L13.8 13.8M13.8 6.2L6.2 13.8" stroke="#fff" stroke-width="3" stroke-linecap="round"/></svg>
<div class="a" style="left:288px;top:573.8px;width:59px;height:22.7px;background:#e6e6e6;border:1px solid #c9c9c9;border-bottom:none;border-radius:3px 3px 0 0;"></div>
<div class="a" style="left:349.7px;top:574.5px;width:70.3px;height:20.3px;background:linear-gradient(#dadada,#d2d2d2);border:1px solid #bfbfbf;border-radius:3px 3px 0 0;"></div>
<div class="a" style="left:423px;top:574.5px;width:135.7px;height:20.3px;background:linear-gradient(#dadada,#d2d2d2);border:1px solid #bfbfbf;border-radius:3px 3px 0 0;"></div>
<div class="a" style="left:562.2px;top:574.5px;width:172.5px;height:20.3px;background:linear-gradient(#dadada,#d2d2d2);border:1px solid #bfbfbf;border-radius:3px 3px 0 0;"></div>
<div class="a" style="left:737.5px;top:574.5px;width:107.7px;height:20.3px;background:linear-gradient(#dadada,#d2d2d2);border:1px solid #bfbfbf;border-radius:3px 3px 0 0;"></div>
<div class="a" style="left:848px;top:574.5px;width:80.2px;height:20.3px;background:linear-gradient(#dadada,#d2d2d2);border:1px solid #bfbfbf;border-radius:3px 3px 0 0;"></div>
<div class="a" style="left:931.2px;top:574.5px;width:93.5px;height:20.3px;background:linear-gradient(#dadada,#d2d2d2);border:1px solid #bfbfbf;border-radius:3px 3px 0 0;"></div>
<svg class="a" style="left:291.5px;top:576.3px;" width="14" height="14" viewBox="0 0 14 14"><circle cx="5.2" cy="5" r="4.5" fill="#e7a248" stroke="#b9772a" stroke-width="0.9"/><circle cx="5.2" cy="5" r="2.6" fill="none" stroke="#f6cf8b" stroke-width="0.8"/><circle cx="9" cy="9" r="4.6" fill="#7fc242" stroke="#4d8f22" stroke-width="0.9"/><circle cx="9" cy="9" r="3" fill="#9bd65c"/><text x="9" y="11.4" font-family="Liberation Sans" font-weight="bold" font-size="6.5" fill="#2e6a12" text-anchor="middle">$</text></svg>
<span class="t" style="left:314.0px;top:577.9px;font-size:13px;color:#1a1a1a;transform:scaleX(0.868);">Totais</span>
<svg class="a" style="left:354px;top:578.7px;" width="10" height="13" viewBox="0 0 10 13"><path d="M0.5 0.5H6.5L9.5 3.5V12.5H0.5Z" fill="#fdfdfd" stroke="#c9ccd3" stroke-width="0.8"/><path d="M6.5 0.5V3.5H9.5" fill="#e9ebf0" stroke="#c9ccd3" stroke-width="0.6"/><rect x="2" y="3.2" width="1.6" height="1.6" fill="#5b7fd0"/><rect x="2" y="6" width="1.6" height="1.6" fill="#5b7fd0"/><rect x="2" y="8.8" width="1.6" height="1.6" fill="#5b7fd0"/><rect x="4.6" y="6" width="2.6" height="1.6" fill="#e0566a"/></svg>
<span class="t" style="left:374.2px;top:578.4px;font-size:13px;color:#1a1a1a;transform:scaleX(0.848);">Volumes</span>
<svg class="a" style="left:428px;top:578.5px;" width="12" height="13" viewBox="0 0 12 13"><path d="M0.5 0.5H7L10 3.5V11.5H0.5Z" fill="#fdfdfd" stroke="#c5c9cf" stroke-width="0.8"/><path d="M7 0.5V3.5H10" fill="#eceef1" stroke="#c5c9cf" stroke-width="0.6"/><circle cx="9" cy="10" r="2.6" fill="#8fcf6a"/><path d="M7.6 10H10.4M9 8.6V11.4" stroke="#fff" stroke-width="0.9"/></svg>
<span class="t" style="left:447.7px;top:578.4px;font-size:13px;color:#1a1a1a;transform:scaleX(0.867);">Informações do Fisco</span>
<svg class="a" style="left:566.5px;top:577.5px;" width="11" height="13" viewBox="0 0 11 13"><path d="M0.5 0.5H10.5V12.5H0.5Z" fill="#f3f6fb" stroke="#b9c3d6" stroke-width="0.8"/><rect x="1.2" y="9" width="8.6" height="2.8" fill="#d5e2f4"/><path d="M3.3 0.8H6.3V5.6L4.8 4.4L3.3 5.6Z" fill="#d0333f"/></svg>
<span class="t" style="left:586.7px;top:578.4px;font-size:13px;color:#1a1a1a;transform:scaleX(0.888);">Informações de Contribuinte</span>
<svg class="a" style="left:741.2px;top:578.7px;" width="12.5" height="12.3" viewBox="0 0 12.5 12.3"><rect x="0.6" y="0.6" width="11.3" height="10.3" rx="2" fill="#f0a640" stroke="#b06a1c" stroke-width="0.8"/><rect x="2" y="2" width="8.5" height="5" rx="0.6" fill="#27324a"/><rect x="1.4" y="8.2" width="2.2" height="1.3" fill="#fbe3a5"/><rect x="8.9" y="8.2" width="2.2" height="1.3" fill="#fbe3a5"/><rect x="1.8" y="10.8" width="2.2" height="1.4" fill="#3a3a3a"/><rect x="8.5" y="10.8" width="2.2" height="1.4" fill="#3a3a3a"/></svg>
<span class="t" style="left:763.2px;top:578.4px;font-size:13px;color:#1a1a1a;transform:scaleX(0.882);">Transportadora</span>
<svg class="a" style="left:853px;top:579px;" width="11" height="11" viewBox="0 0 11 11"><path d="M0.5 0.5H7.5V8.5H0.5Z" fill="#f4f6fa" stroke="#aab3c4" stroke-width="0.8"/><circle cx="7" cy="5" r="2.9" fill="#e8eef8" stroke="#7e8aa3" stroke-width="0.9"/><path d="M4.9 7.2L2.6 10.4" stroke="#7e8aa3" stroke-width="1.3" stroke-linecap="round"/></svg>
<span class="t" style="left:873.0px;top:578.4px;font-size:13px;color:#1a1a1a;transform:scaleX(0.819);">Referência</span>
<svg class="a" style="left:933.7px;top:577.5px;" width="13.3" height="13" viewBox="0 0 13.3 13"><circle cx="5.6" cy="5.6" r="5" fill="#9fc3e6" stroke="#6d93b8" stroke-width="0.7"/><path d="M2.2 3.4C3.6 1.6 6 2 6.4 3.6C6.8 5 5 5.4 4.6 6.8C4.2 8 3 7.6 2.2 6.4Z" fill="#7bbf5a"/><path d="M7.4 2.2C8.8 2.8 9.8 4 10 5.4C9 5.6 8 5 7.6 4Z" fill="#7bbf5a"/><circle cx="9.6" cy="9.4" r="3.4" fill="#78c247" stroke="#fff" stroke-width="0.6"/><path d="M9.6 7.5L11.4 9.6H10.3V11.3H8.9V9.6H7.8Z" fill="#fff"/></svg>
<span class="t" style="left:955.7px;top:578.4px;font-size:13px;color:#1a1a1a;transform:scaleX(0.869);">Contingência</span>
<div class="a" style="left:287px;top:597px;width:1026px;height:96.2px;background:#dedede;border:1px solid #c4c4c4;box-shadow:1px 1px 0 #ebebeb;"></div>
<span class="t" style="left:303.0px;top:607.2px;font-size:13.5px;color:#1a1a1a;transform:scaleX(0.898);">SubTotal</span>
<div class="a" style="left:302.2px;top:622px;width:120.6px;height:21.2px;background:#fff;border:1px solid #909090;box-shadow:1px 1px 0 #ececec;border-color:#6f6f6f;box-shadow:inset 0 0 0 1px #d0d0d0,1px 1px 0 #ececec;"></div>
<span class="t" style="left:392.6px;top:625.3px;font-size:14px;font-weight:bold;color:#0c0c6a;transform:scaleX(0.918);transform-origin:100% 50%;">0,00</span>
<span class="t" style="left:428.0px;top:607.2px;font-size:13.5px;color:#1a1a1a;transform:scaleX(0.858);">Base Cofins</span>
<div class="a" style="left:427.2px;top:622px;width:120.6px;height:21.2px;background:#fff;border:1px solid #909090;box-shadow:1px 1px 0 #ececec;"></div>
<span class="t" style="left:520.0px;top:626.2px;font-size:13px;color:#222;transform:scaleX(0.885);transform-origin:100% 50%;">0,00</span>
<span class="t" style="left:554.0px;top:607.2px;font-size:13.5px;color:#1a1a1a;transform:scaleX(0.896);">Valor Cofins</span>
<div class="a" style="left:553px;top:622px;width:120.5px;height:21.2px;background:#fff;border:1px solid #909090;box-shadow:1px 1px 0 #ececec;"></div>
<span class="t" style="left:645.7px;top:626.2px;font-size:13px;color:#222;transform:scaleX(0.885);transform-origin:100% 50%;">0,00</span>
<span class="t" style="left:680.7px;top:607.2px;font-size:13.5px;color:#1a1a1a;transform:scaleX(0.796);">Base PIS</span>
<div class="a" style="left:680px;top:622px;width:118.8px;height:21.2px;background:#fff;border:1px solid #909090;box-shadow:1px 1px 0 #ececec;"></div>
<span class="t" style="left:771.0px;top:626.2px;font-size:13px;color:#222;transform:scaleX(0.885);transform-origin:100% 50%;">0,00</span>
<span class="t" style="left:806.2px;top:605.8px;font-size:13.5px;color:#1a1a1a;transform:scaleX(0.848);">Valor PIS</span>
<div class="a" style="left:805px;top:622px;width:118.8px;height:21.2px;background:#fff;border:1px solid #909090;box-shadow:1px 1px 0 #ececec;"></div>
<span class="t" style="left:896.0px;top:626.2px;font-size:13px;color:#222;transform:scaleX(0.885);transform-origin:100% 50%;">0,00</span>
<span class="t" style="left:932.5px;top:606.6px;font-size:13.5px;color:#1a1a1a;transform:scaleX(0.842);">Base de IPI</span>
<div class="a" style="left:931.7px;top:622px;width:120.1px;height:21.2px;background:#fff;border:1px solid #909090;box-shadow:1px 1px 0 #ececec;"></div>
<span class="t" style="left:1058.0px;top:604.5px;font-size:13.5px;color:#1a1a1a;transform:scaleX(0.888);">Valor de IPI</span>
<div class="a" style="left:1057.3px;top:622px;width:120.4px;height:21.2px;background:#fff;border:1px solid #909090;box-shadow:1px 1px 0 #ececec;"></div>
<span class="t" style="left:1149.9px;top:626.2px;font-size:13px;color:#222;transform:scaleX(0.885);transform-origin:100% 50%;">0,00</span>
<span class="t" style="left:1184.7px;top:608.6px;font-size:13.5px;color:#1a1a1a;transform:scaleX(0.844);">Frete</span>
<div class="a" style="left:1184px;top:622px;width:119.4px;height:21.2px;background:#fff;border:1px solid #909090;box-shadow:1px 1px 0 #ececec;"></div>
<span class="t" style="left:1275.6px;top:626.2px;font-size:13px;color:#222;transform:scaleX(0.885);transform-origin:100% 50%;">0,00</span>
<span class="t" style="left:303.0px;top:647.9px;font-size:13.5px;color:#1a1a1a;transform:scaleX(0.884);">Seguro</span>
<div class="a" style="left:302.2px;top:662px;width:120.6px;height:21.2px;background:#fff;border:1px solid #909090;box-shadow:1px 1px 0 #ececec;"></div>
<span class="t" style="left:395.0px;top:666.2px;font-size:13px;color:#222;transform:scaleX(0.885);transform-origin:100% 50%;">0,00</span>
<span class="t" style="left:428.0px;top:650.4px;font-size:13.5px;color:#1a1a1a;transform:scaleX(0.864);">Outras</span>
<div class="a" style="left:427.2px;top:663.7px;width:120.6px;height:21px;background:#fff;border:1px solid #909090;box-shadow:1px 1px 0 #ececec;"></div>
<span class="t" style="left:520.0px;top:667.8px;font-size:13px;color:#222;transform:scaleX(0.885);transform-origin:100% 50%;">0,00</span>
<span class="t" style="left:554.0px;top:649.1px;font-size:13.5px;color:#1a1a1a;transform:scaleX(0.897);">Desconto</span>
<div class="a" style="left:553px;top:663.7px;width:120.5px;height:21px;background:#fff;border:1px solid #909090;box-shadow:1px 1px 0 #ececec;"></div>
<span class="t" style="left:645.7px;top:667.8px;font-size:13px;color:#222;transform:scaleX(0.885);transform-origin:100% 50%;">0,00</span>
<span class="t" style="left:681.7px;top:650.4px;font-size:13.5px;color:#1a1a1a;transform:scaleX(0.887);">Desoneração</span>
<div class="a" style="left:680px;top:663.7px;width:118.8px;height:21px;background:#fff;border:1px solid #909090;box-shadow:1px 1px 0 #ececec;"></div>
<span class="t" style="left:806.7px;top:648.6px;font-size:13.5px;color:#1a1a1a;transform:scaleX(0.842);">Base de ICMS</span>
<svg class="a" style="left:886px;top:646.3px;" width="16" height="16" viewBox="0 0 20 20"><rect x="0.6" y="0.6" width="18.8" height="18.8" rx="4" fill="#e8e8e8" stroke="#c2c2c2" stroke-width="1"/><circle cx="10" cy="10" r="7.7" fill="#333"/><text x="10" y="14.2" font-family="Liberation Sans" font-weight="bold" font-size="11.8" fill="#f2f2f2" text-anchor="middle">?</text></svg>
<div class="a" style="left:806.2px;top:665.5px;width:119.3px;height:20.8px;background:#fff;border:1px solid #909090;box-shadow:1px 1px 0 #ececec;"></div>
<span class="t" style="left:897.7px;top:669.5px;font-size:13px;color:#222;transform:scaleX(0.885);transform-origin:100% 50%;">0,00</span>
<span class="t" style="left:932.5px;top:648.6px;font-size:13.5px;color:#1a1a1a;transform:scaleX(0.879);">Valor de ICMS</span>
<div class="a" style="left:931.7px;top:663.7px;width:120.1px;height:21px;background:#fff;border:1px solid #909090;box-shadow:1px 1px 0 #ececec;"></div>
<span class="t" style="left:1024.0px;top:667.8px;font-size:13px;color:#222;transform:scaleX(0.885);transform-origin:100% 50%;">0,00</span>
<span class="t" style="left:1060.8px;top:650.2px;font-size:13.5px;color:#1a1a1a;transform:scaleX(0.837);">Base de ICMS ST</span>
<div class="a" style="left:1059.9px;top:663.5px;width:119.9px;height:21px;background:#fff;border:1px solid #909090;box-shadow:1px 1px 0 #ececec;"></div>
<span class="t" style="left:1186.3px;top:650.2px;font-size:13.5px;color:#1a1a1a;transform:scaleX(0.865);">Valor de ICMS ST</span>
<div class="a" style="left:1185.8px;top:663.5px;width:119.9px;height:21px;background:#fff;border:1px solid #909090;box-shadow:1px 1px 0 #ececec;"></div>
<div class="a" style="left:286.9px;top:701.8px;width:101.3px;height:77px;background:#4c4c4c;border-radius:3px;box-shadow:inset 0 0 0 1px #454545;"></div>
<div class="a" style="left:396px;top:701.8px;width:102.4px;height:77px;background:#9c9c9c;border-radius:3px;box-shadow:inset 0 0 0 1px #979797;"></div>
<div class="a" style="left:505.8px;top:701.8px;width:102.4px;height:77px;background:#9c9c9c;border-radius:3px;box-shadow:inset 0 0 0 1px #979797;"></div>
<div class="a" style="left:615.9px;top:701.8px;width:101.4px;height:77px;background:#9c9c9c;border-radius:3px;box-shadow:inset 0 0 0 1px #979797;"></div>
<div class="a" style="left:724.9px;top:701.8px;width:102px;height:77px;background:#4c4c4c;border-radius:3px;box-shadow:inset 0 0 0 1px #454545;"></div>
<div class="a" style="left:834.1px;top:701.8px;width:102.6px;height:77px;background:#4c4c4c;border-radius:3px;box-shadow:inset 0 0 0 1px #454545;"></div>
<div class="a" style="left:944.2px;top:701.8px;width:102.6px;height:77px;background:#4c4c4c;border-radius:3px;box-shadow:inset 0 0 0 1px #454545;"></div>
<div class="a" style="left:1054.2px;top:701.8px;width:101.8px;height:77px;background:#4c4c4c;border-radius:3px;box-shadow:inset 0 0 0 1px #454545;"></div>
<span class="t" style="left:306.5px;top:753.2px;font-size:13.5px;color:#e4e4e4;transform:scaleX(0.926);">F2 | Gravar</span>
<span class="t" style="left:412.3px;top:753.2px;font-size:13.5px;color:#959595;transform:scaleX(0.913);">F8 | Espelho</span>
<span class="t" style="left:515.5px;top:753.2px;font-size:13.5px;color:#959595;transform:scaleX(0.965);">F3 | Transmitir</span>
<span class="t" style="left:629.5px;top:753.2px;font-size:13.5px;color:#959595;transform:scaleX(0.986);">F4 | Imprimir</span>
<span class="t" style="left:738.7px;top:753.2px;font-size:13.5px;color:#e4e4e4;transform:scaleX(0.971);">F6 | Importar</span>
<span class="t" style="left:851.1px;top:753.2px;font-size:13.5px;color:#e4e4e4;transform:scaleX(0.873);">F9 | Pessoas</span>
<span class="t" style="left:959.5px;top:753.2px;font-size:13.5px;color:#e4e4e4;transform:scaleX(0.910);">F10 | Transp.</span>
<span class="t" style="left:1077.8px;top:753.2px;font-size:13.5px;color:#e4e4e4;transform:scaleX(0.873);">ESC | Sair</span>
<svg class="a" style="left:322.4px;top:714px;" width="30" height="30" viewBox="0 0 30 30"><defs><radialGradient id="gk" cx="0.4" cy="0.25" r="0.85"><stop offset="0" stop-color="#c2e36a"/><stop offset="0.55" stop-color="#8cc63e"/><stop offset="1" stop-color="#5f9a24"/></radialGradient></defs><circle cx="15" cy="15" r="14" fill="url(#gk)" stroke="#4e7f1c" stroke-width="1.2"/><path d="M6.8 14.8L10.4 12.2L13.6 16.4L21.4 5.8L24.8 8.2L14 22.6Z" fill="#fff" stroke="#6b8f45" stroke-width="0.8"/></svg>
<svg class="a" style="left:431px;top:714px;" width="34" height="30" viewBox="0 0 34 30"><rect x="4.5" y="1" width="24" height="18" rx="1.5" fill="#b9b9b9" stroke="#a6a6a6" stroke-width="0.6"/><rect x="5.5" y="2" width="22" height="3" fill="#a8a8a8"/><rect x="1" y="6" width="23.5" height="20" rx="1.2" fill="#c9c9c9" stroke="#a9a9a9" stroke-width="0.6"/><rect x="1.3" y="6.3" width="22.9" height="4.4" fill="#909090"/><rect x="20.5" y="7.2" width="2.4" height="2.4" fill="#6e6e6e"/><ellipse cx="21.5" cy="21.8" rx="10.6" ry="7.2" fill="#cdcdcd" stroke="#7b7b7b" stroke-width="1.3"/><circle cx="21.5" cy="21.6" r="5" fill="#8d8d8d" stroke="#7a7a7a" stroke-width="0.8"/><circle cx="21.5" cy="21.6" r="2.4" fill="#626262"/><circle cx="20.2" cy="20" r="1" fill="#d8d8d8"/></svg>
<svg class="a" style="left:541px;top:713px;" width="31" height="32" viewBox="0 0 31 32"><path d="M5 3C0.8 8 0.8 16 5 21" fill="none" stroke="#c3c3c3" stroke-width="1.7" stroke-linecap="round"/><path d="M9.4 7C7 10 7 14.5 9.4 17.5" fill="none" stroke="#bdbdbd" stroke-width="1.6" stroke-linecap="round"/><path d="M26 3C30.2 8 30.2 16 26 21" fill="none" stroke="#c3c3c3" stroke-width="1.7" stroke-linecap="round"/><path d="M21.6 7C24 10 24 14.5 21.6 17.5" fill="none" stroke="#bdbdbd" stroke-width="1.6" stroke-linecap="round"/><ellipse cx="15.6" cy="28.6" rx="7.2" ry="2.5" fill="#737373"/><path d="M14 12H17.2L19.4 27.6H11.8Z" fill="#7b7b7b"/><circle cx="15.5" cy="10.8" r="3.3" fill="#828282" stroke="#747474" stroke-width="0.6"/><circle cx="15" cy="10" r="1.1" fill="#a0a0a0"/></svg>
<svg class="a" style="left:651px;top:712.5px;" width="32" height="32" viewBox="0 0 32 32"><rect x="6.8" y="0.6" width="17.4" height="12" fill="#c6c6c6" stroke="#b0b0b0" stroke-width="0.6"/><rect x="1" y="10.2" width="29.6" height="17.6" rx="3.4" fill="#c9c9c9" stroke="#ababab" stroke-width="0.6"/><path d="M4.6 12.4H26.8V15C26.8 17 25.4 18 23.6 18H7.8C6 18 4.6 17 4.6 15Z" fill="#7d7d7d"/><rect x="5.6" y="12.6" width="20" height="1.6" fill="#a4a4a4"/><rect x="5.6" y="22" width="20" height="1.8" fill="#8a8a8a"/><rect x="6.8" y="23.4" width="17.4" height="7.4" fill="#cacaca" stroke="#9c9c9c" stroke-width="0.7"/><rect x="8.8" y="25.4" width="13.4" height="1" fill="#a8a8a8"/><rect x="8.8" y="27.6" width="13.4" height="1" fill="#a8a8a8"/></svg>
<svg class="a" style="left:760px;top:713.6px;" width="31" height="31" viewBox="0 0 31 31"><defs><linearGradient id="ia" x1="0" y1="0" x2="0" y2="1"><stop offset="0" stop-color="#c4e8f7"/><stop offset="1" stop-color="#7ba5e6"/></linearGradient></defs><rect x="0.4" y="0.4" width="30" height="30" rx="2" fill="#f1f1fb" stroke="#dfe3f3" stroke-width="0.8"/><path d="M0.4 22.6H30.4V28.4a2 2 0 0 1 -2 2H2.4a2 2 0 0 1 -2 -2Z" fill="#78b0df"/><rect x="0.4" y="22" width="30" height="1.1" fill="#fff"/><path d="M15.3 3.6L22.4 12.8H18.9V20.4H11.7V12.8H8.2Z" fill="url(#ia)" stroke="#4d6390" stroke-width="1.1" stroke-linejoin="round"/></svg>
<svg class="a" style="left:867px;top:713px;" width="37" height="31" viewBox="0 0 37 31"><path d="M2.3 21.6C2.3 15.5 5.8 14 8.55 14C11.3 14 14.8 15.5 14.8 21.6C12.3 23.2 4.8 23.2 2.3 21.6Z" fill="#8cc247" stroke="#4c7c20" stroke-width="0.9"/><path d="M3.9 18.2C5.425 15.4 11.675 15.4 13.2 18.2" fill="none" stroke="#b9de80" stroke-width="1.3" opacity="0.9"/><ellipse cx="10.9" cy="8.752" rx="4.056" ry="5.504" fill="#f3cfa8"/><path d="M5.7 9.84C4.92 -0.4 16.88 -0.4 16.1 9.84C14.8 5.68 12.46 4.72 10.38 5.36C8.3 5.68 6.74 7.28 5.7 9.84Z" fill="#a5673a"/><path d="M21.6 21.6C21.6 15.5 25.156 14 27.95 14C30.744 14 34.3 15.5 34.3 21.6C31.76 23.2 24.14 23.2 21.6 21.6Z" fill="#8cc247" stroke="#4c7c20" stroke-width="0.9"/><path d="M23.2 18.2C24.775 15.4 31.125 15.4 32.7 18.2" fill="none" stroke="#b9de80" stroke-width="1.3" opacity="0.9"/><ellipse cx="25.3" cy="8.752" rx="4.056" ry="5.504" fill="#f3cfa8"/><path d="M20.1 9.84C19.32 -0.4 31.28 -0.4 30.5 9.84C29.2 5.68 26.86 4.72 24.78 5.36C22.7 5.68 21.14 7.28 20.1 9.84Z" fill="#a5673a"/><path d="M7.7 28.6C7.7 23.1 13.44 21.6 17.95 21.6C22.46 21.6 28.2 23.1 28.2 28.6C24.1 30.2 11.8 30.2 7.7 28.6Z" fill="#8cc247" stroke="#4c7c20" stroke-width="0.9"/><path d="M9.3 25.8C12.825 23 23.075 23 26.6 25.8" fill="none" stroke="#b9de80" stroke-width="1.3" opacity="0.9"/><ellipse cx="18" cy="14.924" rx="4.368" ry="5.848" fill="#f3cfa8"/><path d="M12.4 16.08C11.56 5.2 24.44 5.2 23.6 16.08C22.2 11.66 19.68 10.64 17.44 11.32C15.2 11.66 13.52 13.36 12.4 16.08Z" fill="#95501f"/></svg>
<svg class="a" style="left:980px;top:713px;" width="32" height="32" viewBox="0 0 32 32"><defs><linearGradient id="bb" x1="0" y1="0" x2="0" y2="1"><stop offset="0" stop-color="#fbe7ad"/><stop offset="0.25" stop-color="#f3c469"/><stop offset="1" stop-color="#e39a35"/></linearGradient></defs><rect x="6.4" y="27" width="4.2" height="3.6" rx="1" fill="#2a2530"/><rect x="20.4" y="27" width="4.2" height="3.6" rx="1" fill="#2a2530"/><rect x="0.6" y="11.6" width="1.8" height="4.4" rx="0.8" fill="#3a3530"/><rect x="28" y="11.6" width="1.8" height="4.4" rx="0.8" fill="#3a3530"/><rect x="2.2" y="0.8" width="26" height="26.6" rx="4.6" fill="url(#bb)" stroke="#b8772a" stroke-width="0.9"/><rect x="10" y="3.6" width="10.2" height="1.3" rx="0.6" fill="#3a2f1c"/><rect x="6" y="7" width="18.2" height="10.6" rx="0.8" fill="#2f3a5e" stroke="#1f2436" stroke-width="0.8"/><rect x="6.6" y="7.6" width="17" height="4" fill="#44507c" opacity="0.7"/><circle cx="7.6" cy="22.2" r="2" fill="#fdf0b8"/><circle cx="22.6" cy="22.2" r="2" fill="#fdf0b8"/><rect x="11.6" y="20.4" width="7" height="2.6" fill="#f1b244"/><rect x="11.8" y="24.6" width="6.8" height="2.2" rx="0.6" fill="#fbf6ec"/></svg>
<svg class="a" style="left:1090.2px;top:714.5px;" width="30" height="30" viewBox="0 0 30 30"><defs><radialGradient id="rx" cx="0.42" cy="0.25" r="0.85"><stop offset="0" stop-color="#f08a8a"/><stop offset="0.5" stop-color="#dc3c3c"/><stop offset="1" stop-color="#a81818"/></radialGradient></defs><circle cx="15" cy="15" r="14.2" fill="url(#rx)" stroke="#9b1c1c" stroke-width="0.9"/><path d="M10 10L20 20M20 10L10 20" stroke="#fff" stroke-width="4.2" stroke-linecap="round"/></svg>
<div class="a" style="left:1187.9px;top:703.8px;width:123.9px;height:35px;border:1px solid #c6c6c6;border-radius:4px;box-shadow:1px 1px 0 #ededed, inset 1px 1px 0 #ededed;"></div>
<div class="a" style="left:1193.5px;top:698px;width:45.5px;height:11px;background:#dbdbdb;"></div>
<span class="t" style="left:1195.6px;top:696.3px;font-size:13px;color:#1a1a1a;transform:scaleX(0.872);">Total R$</span>
<div class="a" style="left:1191.7px;top:714px;width:116px;height:21.2px;background:#efefef;"></div>
<span class="t" style="left:1229.9px;top:718.9px;font-size:19px;font-weight:bold;color:#0b0b6e;transform:scaleX(1.079);">0.00</span>
<div class="a" style="left:1187.9px;top:752.6px;width:122.9px;height:28.8px;border:1px solid #c6c6c6;border-radius:4px;box-shadow:1px 1px 0 #ededed, inset 1px 1px 0 #ededed;"></div>
<div class="a" style="left:1193px;top:746px;width:56px;height:11px;background:#dbdbdb;"></div>
<span class="t" style="left:1194.9px;top:744.1px;font-size:13px;color:#1a1a1a;transform:scaleX(0.886);">Total Itens</span>
<div class="a" style="left:1191px;top:762.6px;width:116.2px;height:14.8px;background:#ececec;"></div>

</div>
</body>
</html>
